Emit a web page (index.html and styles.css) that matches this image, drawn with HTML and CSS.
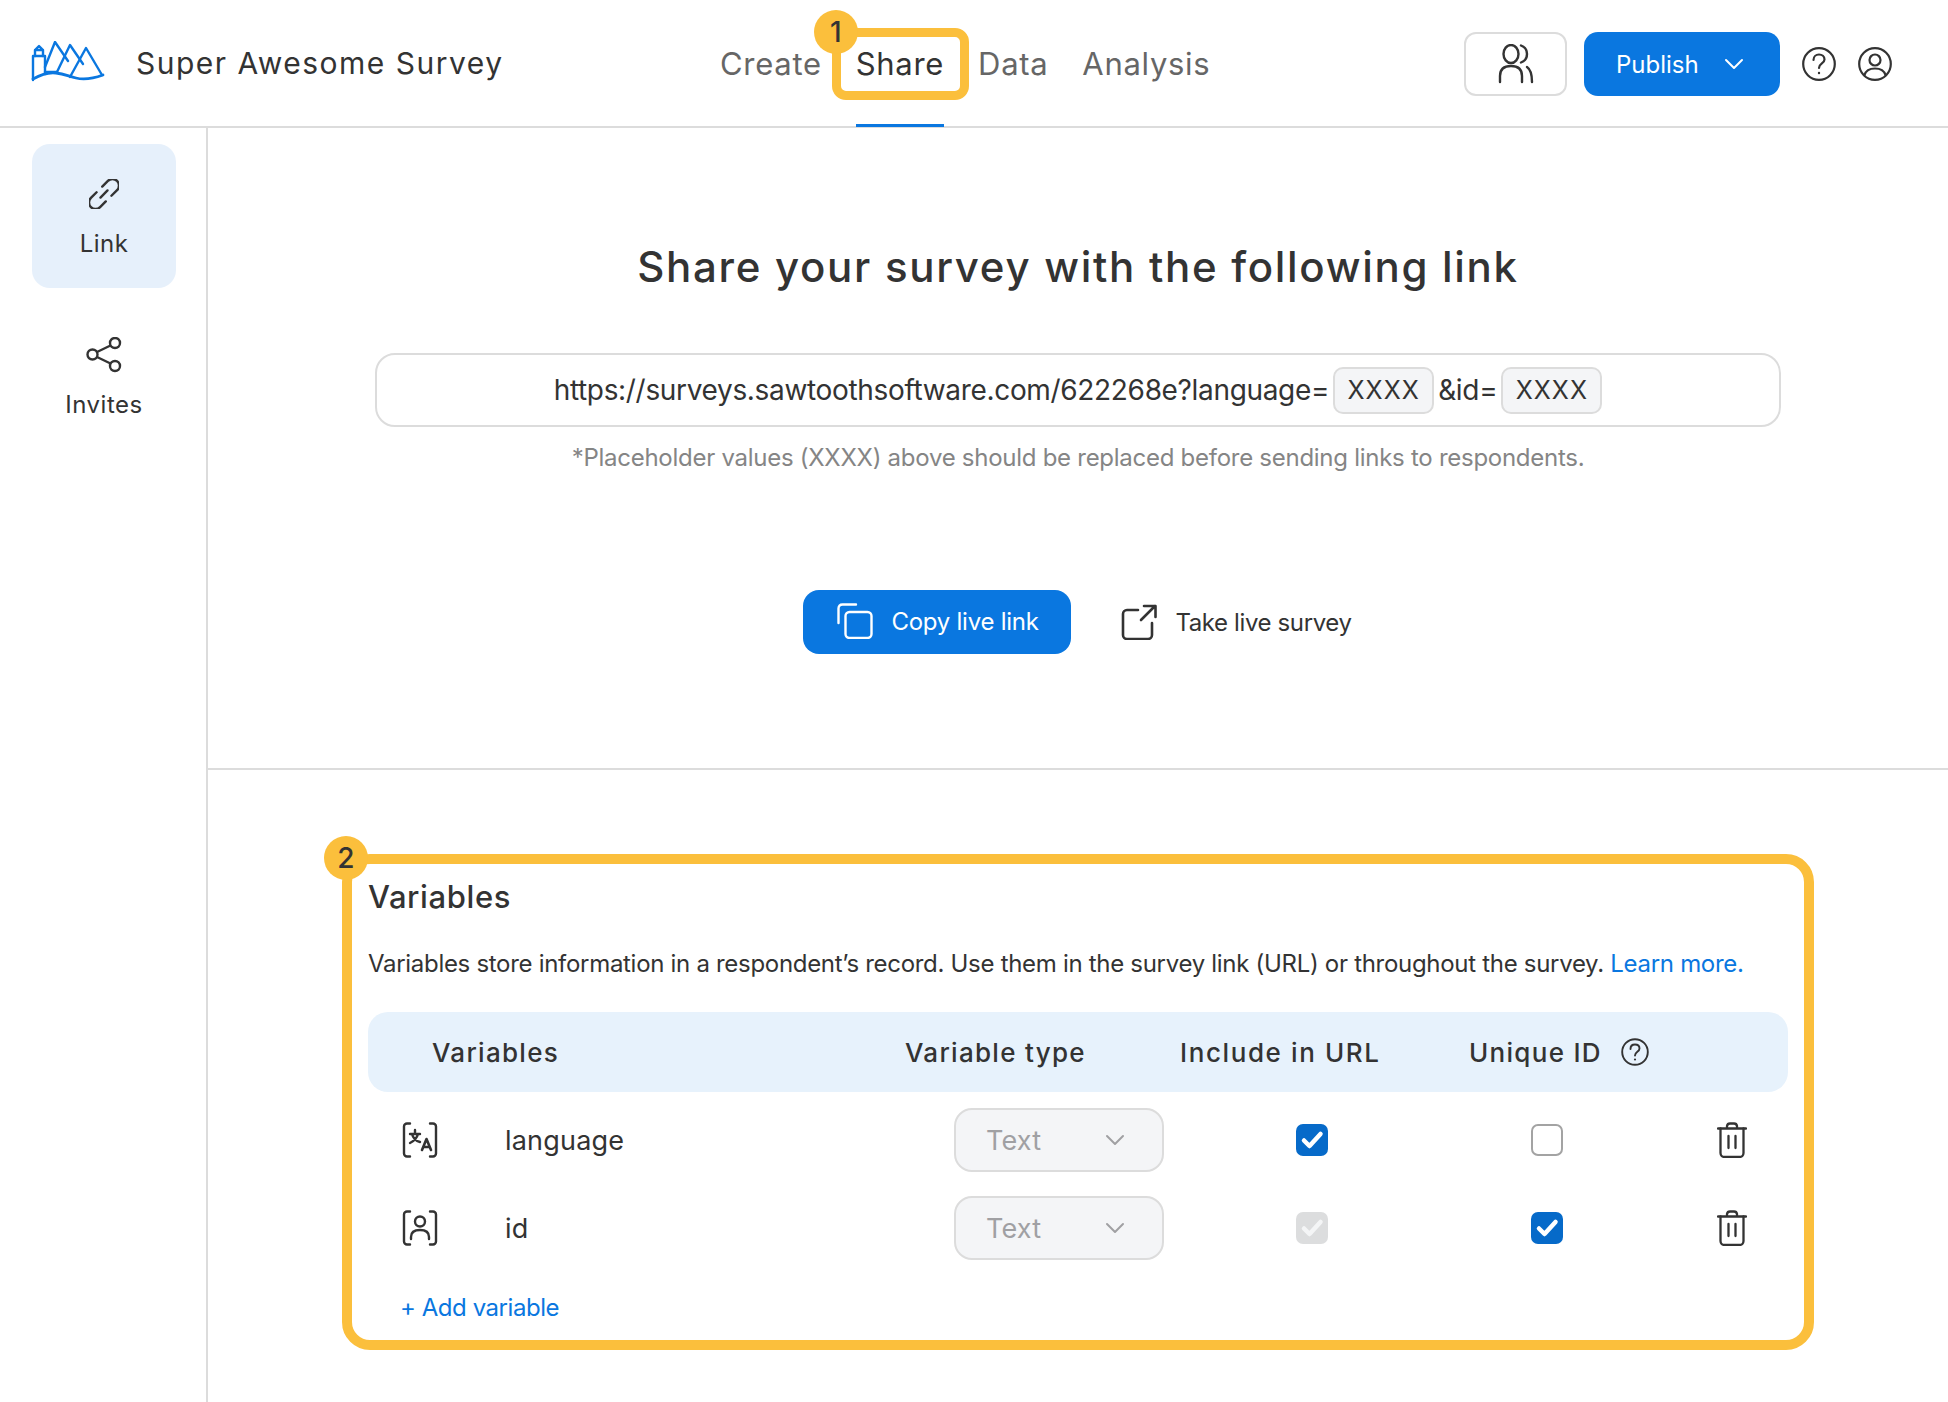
FILE: index.html
```html
<!DOCTYPE html>
<html lang="en">
<head>
<meta charset="utf-8">
<title>Super Awesome Survey</title>
<link rel="stylesheet" href="styles.css">
</head>
<body>
<header class="topbar">
  <div class="brand">
    <svg class="logo" viewBox="0 0 76 42" fill="none" stroke="#0a77e0" stroke-width="2.4" stroke-linejoin="round" stroke-linecap="round">
      <path d="M3 39V15H15V33"/>
      <path d="M5 15V9H13V15M5 9L9 5L13 9"/>
      <path d="M15 26L25 1L38 20"/>
      <path d="M27 31L40 4L53 23"/>
      <path d="M40 36L56 7L72 34"/>
      <path d="M15 31H27"/>
      <path d="M3 38C10 34 18 31 26 32S38 35 46 37S62 38 73 34" stroke-width="2.8"/>
    </svg>
    <span class="survey-name">Super Awesome Survey</span>
  </div>
  <nav class="tabs">
    <a class="tab">Create</a>
    <a class="tab tab-active">Share<span class="callout-frame"></span><span class="badge badge-one">1</span></a>
    <a class="tab">Data</a>
    <a class="tab">Analysis</a>
  </nav>
  <div class="top-actions">
    <button class="people-btn" type="button">
      <svg class="icon-people" viewBox="0 0 36 40" fill="none" stroke="#333" stroke-width="2.4" stroke-linecap="round">
        <ellipse cx="13" cy="10" rx="7.5" ry="9"/>
        <path d="M2 38V32C2 25 6 22 13 22C20 22 24 25 24 32V38"/>
        <path d="M23 1.5C27 3 29 6 29 10C29 14 27 17 23 18.5"/>
        <path d="M29 23C32 25 34 29 34 38"/>
      </svg>
    </button>
    <button class="publish-btn" type="button">
      <span>Publish</span>
      <svg class="icon-chevron" viewBox="0 0 20 12" fill="none" stroke="#fff" stroke-width="2" stroke-linecap="round" stroke-linejoin="round"><path d="M2 2L10 10L18 2"/></svg>
    </button>
    <svg class="icon-round" viewBox="0 0 34 34" fill="none" stroke="#333" stroke-width="2.2" stroke-linecap="round">
      <circle cx="17" cy="17" r="15.8"/>
      <path d="M11.5 13C11.5 9.5 14 7.5 17 7.5C20 7.5 22.5 9.5 22.5 12.5C22.5 16.5 17 16.5 17 21"/>
      <circle cx="17" cy="26" r="1.2" fill="#333" stroke="none"/>
    </svg>
    <svg class="icon-round" viewBox="0 0 34 34" fill="none" stroke="#333" stroke-width="2.2" stroke-linecap="round">
      <circle cx="17" cy="17" r="15.8"/>
      <circle cx="17" cy="13" r="5.5"/>
      <path d="M6.5 28C8 23 12 21.5 17 21.5C22 21.5 26 23 27.5 28"/>
    </svg>
  </div>
</header>

<div class="shell">
  <aside class="sidebar">
    <a class="side-item side-item-active">
      <svg class="icon-link" viewBox="0 0 30 30" fill="none" stroke="#333" stroke-width="2.4" stroke-linecap="round">
        <g transform="rotate(-45 15 15)">
          <path d="M11 8.5H3A6.5 6.5 0 0 0 3 21.5H11"/>
          <path d="M19 8.5H27A6.5 6.5 0 0 1 27 21.5H19"/>
          <path d="M10 15H20"/>
        </g>
      </svg>
      <span>Link</span>
    </a>
    <a class="side-item">
      <svg class="icon-share" viewBox="0 0 36 36" fill="none" stroke="#333" stroke-width="2.4">
        <circle cx="6.5" cy="17.5" r="5"/>
        <circle cx="29" cy="6" r="5"/>
        <circle cx="29" cy="29" r="5"/>
        <path d="M11 15L24.5 8.5M11 20L24.5 26.5"/>
      </svg>
      <span>Invites</span>
    </a>
  </aside>

  <main class="content">
    <section class="share-panel">
      <h1 class="share-title">Share your survey with the following link</h1>
      <div class="url-box">
        <span class="url-text">https://surveys.sawtoothsoftware.com/622268e?language=</span>
        <span class="chip">XXXX</span>
        <span class="url-text">&amp;id=</span>
        <span class="chip">XXXX</span>
      </div>
      <p class="url-note">*Placeholder values (XXXX) above should be replaced before sending links to respondents.</p>
      <div class="share-actions">
        <button class="copy-btn" type="button">
          <svg class="icon-action" viewBox="0 0 36 36" fill="none" stroke="#fff" stroke-width="2.4" stroke-linecap="round">
            <rect x="8.5" y="9" width="26" height="26" rx="4"/>
            <path d="M1.5 20V5.5Q1.5 1.5 5.5 1.5H19"/>
          </svg>
          <span>Copy live link</span>
        </button>
        <a class="take-link">
          <svg class="icon-action" viewBox="0 0 36 36" fill="none" stroke="#333" stroke-width="2.6" stroke-linecap="round" stroke-linejoin="round">
            <path d="M17 6H6A4 4 0 0 0 2 10V31A4 4 0 0 0 6 35H27A4 4 0 0 0 31 31V19"/>
            <path d="M20 16L34 2M23 2H34.500V13"/>
          </svg>
          <span>Take live survey</span>
        </a>
      </div>
    </section>

    <section class="variables-panel">
      <span class="badge badge-two">2</span>
      <h2 class="variables-title">Variables</h2>
      <p class="variables-desc">Variables store information in a respondent’s record. Use them in the survey link (URL) or throughout the survey. <a class="learn-more">Learn more.</a></p>
      <div class="var-head">
        <span class="head-name">Variables</span>
        <span>Variable type</span>
        <span class="head-url">Include in URL</span>
        <span class="head-unique">Unique ID
          <svg class="icon-help" viewBox="0 0 28 28" fill="none" stroke="#333" stroke-width="1.9" stroke-linecap="round">
            <circle cx="14" cy="14" r="12.8"/>
            <path d="M9.500 11C9.500 8 11.500 6.500 14 6.500C16.500 6.500 18.500 8 18.500 10.500C18.500 13.800 14 13.800 14 17.500"/>
            <circle cx="14" cy="21.500" r="1.1" fill="#333" stroke="none"/>
          </svg>
        </span>
      </div>

      <div class="var-row">
        <div class="cell-name">
          <svg class="icon-var" viewBox="0 0 36 36" fill="none" stroke="#333" stroke-width="2.4" stroke-linecap="round" stroke-linejoin="round">
            <path d="M8 1.500H5A3 3 0 0 0 2 4.500V31.500A3 3 0 0 0 5 34.500H8M28 1.500H31A3 3 0 0 1 34 4.500V31.500A3 3 0 0 1 31 34.500H28"/>
            <path d="M8 12H18M13 8V12M10 12C11 16 14 19 18 20M16 12C15 16 12 19 8 21"/>
            <path d="M20 28L24.500 17L29 28M21.500 25H27.500" stroke-width="2.600"/>
          </svg>
          <span>language</span>
        </div>
        <div class="cell-type">
          <div class="select">
            <span>Text</span>
            <svg class="icon-select" viewBox="0 0 20 12" fill="none" stroke="#a0a0a3" stroke-width="2" stroke-linecap="round" stroke-linejoin="round"><path d="M2 2L10 10L18 2"/></svg>
          </div>
        </div>
        <div class="cell-url">
          <span class="check check-on"><svg viewBox="0 0 32 32" fill="none" stroke="#fff" stroke-width="4.500" stroke-linecap="round" stroke-linejoin="round"><path d="M8 16.500L13.500 22L24.500 10"/></svg></span>
        </div>
        <div class="cell-unique">
          <span class="check check-off"></span>
        </div>
        <div class="cell-delete">
          <svg class="icon-trash" viewBox="0 0 30 36" fill="none" stroke="#333" stroke-width="2.300" stroke-linecap="round" stroke-linejoin="round">
            <path d="M1 6.500H29M10 6.500V4A3 3 0 0 1 13 1.500H17A3 3 0 0 1 20 4V6.500"/>
            <path d="M3.500 6.500V31A4 4 0 0 0 7.500 35H22.500A4 4 0 0 0 26.500 31V6.500"/>
            <path d="M11.500 14V26M18.500 14V26"/>
          </svg>
        </div>
      </div>

      <div class="var-row">
        <div class="cell-name">
          <svg class="icon-var" viewBox="0 0 36 36" fill="none" stroke="#333" stroke-width="2.4" stroke-linecap="round" stroke-linejoin="round">
            <path d="M8 1.500H5A3 3 0 0 0 2 4.500V31.500A3 3 0 0 0 5 34.500H8M28 1.500H31A3 3 0 0 1 34 4.500V31.500A3 3 0 0 1 31 34.500H28"/>
            <circle cx="18" cy="11.500" r="5"/>
            <path d="M9 29V27C9 22 12.500 20 18 20C23.500 20 27 22 27 27V29"/>
          </svg>
          <span>id</span>
        </div>
        <div class="cell-type">
          <div class="select">
            <span>Text</span>
            <svg class="icon-select" viewBox="0 0 20 12" fill="none" stroke="#a0a0a3" stroke-width="2" stroke-linecap="round" stroke-linejoin="round"><path d="M2 2L10 10L18 2"/></svg>
          </div>
        </div>
        <div class="cell-url">
          <span class="check check-disabled"><svg viewBox="0 0 32 32" fill="none" stroke="#f4f5f6" stroke-width="4.500" stroke-linecap="round" stroke-linejoin="round"><path d="M8 16.500L13.500 22L24.500 10"/></svg></span>
        </div>
        <div class="cell-unique">
          <span class="check check-on"><svg viewBox="0 0 32 32" fill="none" stroke="#fff" stroke-width="4.500" stroke-linecap="round" stroke-linejoin="round"><path d="M8 16.500L13.500 22L24.500 10"/></svg></span>
        </div>
        <div class="cell-delete">
          <svg class="icon-trash" viewBox="0 0 30 36" fill="none" stroke="#333" stroke-width="2.300" stroke-linecap="round" stroke-linejoin="round">
            <path d="M1 6.500H29M10 6.500V4A3 3 0 0 1 13 1.500H17A3 3 0 0 1 20 4V6.500"/>
            <path d="M3.500 6.500V31A4 4 0 0 0 7.500 35H22.500A4 4 0 0 0 26.500 31V6.500"/>
            <path d="M11.500 14V26M18.500 14V26"/>
          </svg>
        </div>
      </div>

      <a class="add-variable">+ Add variable</a>
    </section>
  </main>
</div>
</body>
</html>
```
FILE: styles.css
```css
* { box-sizing: border-box; }
html, body { margin: 0; padding: 0; }
body {
  width: 1948px;
  height: 1402px;
  overflow: hidden;
  background: #fff;
  color: #333;
  font-family: "Inter", "Liberation Sans", sans-serif;
}
button { font-family: inherit; cursor: pointer; }
p, h1, h2 { margin: 0; font-weight: 400; }
svg { display: block; flex: none; }

.topbar {
  display: flex;
  align-items: center;
  height: 128px;
  padding: 0 56px 0 30px;
  border-bottom: 2px solid #dcdcdc;
}
.brand { display: flex; align-items: center; width: 690px; gap: 30px; }
.logo { width: 76px; height: 42px; margin-top: -2px; }
.survey-name { margin-top: 0; font-size: 30px; letter-spacing: 1.5px; line-height: 40px; }

.tabs { display: flex; align-items: stretch; height: 126px; gap: 34px; }
.tab {
  position: relative;
  display: flex;
  align-items: center;
  font-size: 31px;
  letter-spacing: 0.7px;
  color: #666;
}
.tab-active { color: #333; }
.tab-active::after {
  content: "";
  position: absolute;
  left: 0;
  right: 0;
  bottom: -1px;
  height: 3px;
  background: #0a77e0;
}
.callout-frame {
  position: absolute;
  left: -24px;
  right: -25px;
  top: 28px;
  height: 72px;
  border: 9px solid #fbbf3c;
  border-radius: 14px;
}
.badge {
  position: absolute;
  width: 44px;
  height: 44px;
  border-radius: 50%;
  background: #fbbf3c;
  color: #333;
  font-size: 28px;
  font-weight: 500;
  line-height: 44px;
  text-align: center;
  letter-spacing: 0;
}
.badge-one { left: -42px; top: 10px; }
.badge-two { left: -28px; top: -28px; }

.top-actions { display: flex; align-items: center; margin-left: auto; padding-top: 2px; }
.people-btn {
  display: flex;
  align-items: center;
  justify-content: center;
  width: 103px;
  height: 64px;
  padding: 0;
  background: #fff;
  border: 2px solid #dcdcdc;
  border-radius: 12px;
}
.icon-people { width: 36px; height: 40px; }
.publish-btn {
  display: flex;
  align-items: center;
  gap: 25px;
  width: 196px;
  height: 64px;
  margin-left: 17px;
  padding: 0 0 0 32px;
  background: #0a77e0;
  color: #fff;
  font-size: 24px;
  border: 0;
  border-radius: 14px;
}
.icon-chevron { width: 20px; height: 12px; }
.icon-round { width: 34px; height: 34px; margin-left: 22px; }

.shell { display: flex; height: 1274px; }
.sidebar {
  display: flex;
  flex-direction: column;
  align-items: center;
  width: 208px;
  padding: 16px 0 0 2px;
  border-right: 2px solid #dcdcdc;
  gap: 16px;
}
.side-item {
  display: flex;
  flex-direction: column;
  align-items: center;
  width: 144px;
  height: 144px;
  padding-top: 35px;
  gap: 20px;
  border-radius: 18px;
  font-size: 24px;
  line-height: 30px;
  letter-spacing: 0.5px;
}
.side-item-active { background: #e6f0fb; }
.icon-link { width: 30px; height: 30px; }
.icon-share { width: 36px; height: 36px; margin-top: -2px; margin-bottom: -3px; }

.content { flex: 1; min-width: 0; }
.share-panel {
  display: flex;
  flex-direction: column;
  align-items: center;
  height: 642px;
  padding-top: 114px;
  border-bottom: 2px solid #dcdcdc;
}
.share-title {
  font-size: 42px;
  line-height: 50px;
  font-weight: 500;
  letter-spacing: 1.7px;
}
.url-box {
  display: flex;
  align-items: center;
  justify-content: center;
  gap: 4px;
  width: 1406px;
  height: 74px;
  margin-top: 61px;
  border: 2px solid #dcdcdc;
  border-radius: 20px;
}
.url-text { font-size: 28px; letter-spacing: -0.33px; }
.chip {
  display: flex;
  align-items: center;
  justify-content: center;
  width: 101px;
  height: 47px;
  background: #f4f5f7;
  border: 2px solid #dcdcdc;
  border-radius: 10px;
  font-size: 25px;
  letter-spacing: 1px;
}
.url-note {
  margin-top: 16px;
  font-size: 24px;
  line-height: 30px;
  letter-spacing: -0.27px;
  color: #858585;
}
.share-actions {
  display: flex;
  align-items: center;
  gap: 50px;
  margin-top: 117px;
  margin-left: -1px;
}
.copy-btn {
  display: flex;
  align-items: center;
  gap: 18px;
  width: 268px;
  height: 64px;
  padding: 0 0 2px 34px;
  background: #0a77e0;
  color: #fff;
  font-size: 24px;
  letter-spacing: -0.25px;
  border: 0;
  border-radius: 16px;
}
.take-link { display: flex; align-items: center; gap: 18px; font-size: 24px; letter-spacing: -0.38px; }
.icon-action { width: 36px; height: 36px; }

.variables-panel {
  position: relative;
  width: 1472px;
  height: 496px;
  margin: 84px auto 0;
  padding: 15px 16px 0;
  border: 10px solid #fbbf3c;
  border-radius: 28px;
}
.variables-title { font-size: 31px; line-height: 36px; font-weight: 500; letter-spacing: 0.6px; }
.variables-desc {
  margin-top: 34px;
  font-size: 24px;
  line-height: 30px;
  letter-spacing: -0.3px;
  white-space: nowrap;
}
.learn-more { color: #0a77e0; }

.var-head, .var-row {
  display: grid;
  align-items: center;
}
.var-head {
  grid-template-columns: 537px 275px 289px 1fr;
  height: 80px;
  margin-top: 33px;
  background: #e7f2fc;
  border-radius: 20px;
  font-size: 26px;
  font-weight: 500;
  letter-spacing: 1.3px;
}
.head-name { padding-left: 64px; }
.head-url { letter-spacing: 1.6px; }
.head-unique { display: flex; align-items: center; gap: 19px; }
.icon-help { width: 28px; height: 28px; }

.var-row {
  grid-template-columns: 537px 275px 351px 186px 1fr;
  height: 64px;
  margin-top: 24px;
  font-size: 27px;
  letter-spacing: 0.2px;
}
.var-head + .var-row { margin-top: 16px; }
.cell-name { display: flex; align-items: center; gap: 67px; padding-left: 34px; }
.icon-var { width: 36px; height: 36px; }
.cell-type { padding-left: 49px; }
.select {
  display: flex;
  align-items: center;
  justify-content: space-between;
  width: 210px;
  height: 64px;
  padding: 0 37px 0 30px;
  background: #f4f5f7;
  border: 2px solid #dcdcdc;
  border-radius: 18px;
  color: #a0a0a3;
}
.icon-select { width: 20px; height: 12px; }
.cell-url { padding-left: 116px; }
.check {
  display: block;
  width: 32px;
  height: 32px;
  border-radius: 7px;
}
.check-on { background: #066ac9; }
.check-off { border: 2px solid #a3a3a3; background: #fff; }
.check-disabled { background: #dcddde; }
.check svg { width: 32px; height: 32px; }
.icon-trash { width: 30px; height: 36px; }

.add-variable {
  display: block;
  margin-top: 33px;
  padding-left: 32px;
  font-size: 24px;
  line-height: 30px;
  letter-spacing: -0.45px;
  color: #0a77e0;
}
```
